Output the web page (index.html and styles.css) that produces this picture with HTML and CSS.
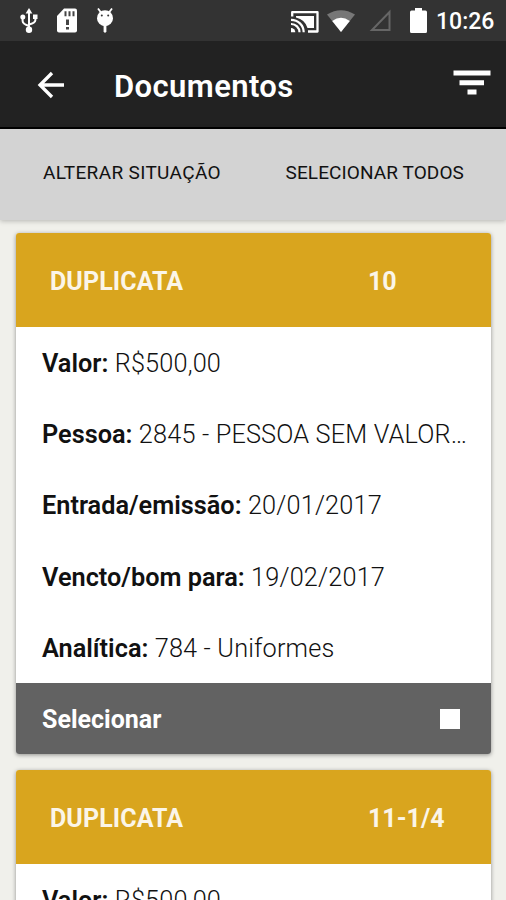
FILE: index.html
```
<!DOCTYPE html>
<html lang="pt-BR">
<head>
    <meta charset="utf-8">
    <meta name="viewport" content="width=device-width, initial-scale=1">
    <title>Documentos</title>
    <link rel="stylesheet" href="styles.css">
</head>
<body>

<div class="statusbar">
    <div class="status-left">
        <svg class="ic-usb" width="18" height="26" viewBox="0 0 18 26">
            <path d="M9 5v16M2.600 9v4q0 3 6.400 5M15.400 9v3q0 3-6.400 4.500" fill="none" stroke="#fff" stroke-width="2"/>
            <path d="M9 0l3.400 5.500H5.600z" fill="#fff"/>
            <circle cx="2.800" cy="9" r="2.500" fill="#fff"/>
            <path d="M13 6.500h4.500V11H13z" fill="#fff"/>
            <circle cx="9" cy="21.700" r="3.200" fill="#fff"/>
        </svg>
        <svg class="ic-sd" width="20" height="26" viewBox="0 0 20 26">
            <path d="M7 .5h11q2 0 2 2v20q0 2-2 2H2q-2 0-2-2V8z" fill="#fff"/>
            <path d="M7.500 3.200h2v5h-2zM11.500 3.200h2v5h-2zM15.500 3.200h2v5h-2zM9 11.500h3v5.500H9zM9 19h3v2.500H9z" fill="#444"/>
        </svg>
        <svg class="ic-bug" width="18" height="26" viewBox="0 0 18 26">
            <path d="M2 .5l3 4M16 .5l-3 4" stroke="#fff" stroke-width="1.800"/>
            <circle cx="9" cy="10.200" r="8" fill="#fff"/>
            <path d="M7.600 17h2.800v6.500q-1.400 2.500-2.800 0z" fill="#fff"/>
            <circle cx="5.800" cy="7.400" r="1" fill="#333"/>
            <circle cx="12.200" cy="7.400" r="1" fill="#333"/>
        </svg>
    </div>
    <div class="status-right">
        <svg class="ic-cast" width="28" height="22" viewBox="0 0 28 22">
            <path d="M1.200 5.500V1.200h25.300v19.300H17" fill="none" stroke="#fff" stroke-width="2.300" stroke-linejoin="round"/>
            <path d="M5 5h18v12h-6.500Q14 8.500 5 6.500z" fill="#fff"/>
            <path d="M0 8.800a12.500 12.500 0 0 1 12.700 12.500M0 13a8.300 8.300 0 0 1 8.500 8.300" fill="none" stroke="#fff" stroke-width="2.200"/>
            <path d="M0 17a4.300 4.300 0 0 1 4.300 4.300H0z" fill="#fff"/>
        </svg>
        <svg class="ic-wifi" width="28" height="22" viewBox="0 0 28 22">
            <path d="M0 4.500Q14-4 28 4.500L14 22z" fill="#777"/>
            <path d="M5.200 11Q14 4.500 22.800 11L14 22z" fill="#fff"/>
        </svg>
        <svg class="ic-signal" width="22" height="23" viewBox="0 0 22 23">
            <path d="M20.500 4v18H3z" fill="none" stroke="#666" stroke-width="2"/>
        </svg>
        <svg class="ic-battery" width="17" height="25" viewBox="0 0 17 24" preserveAspectRatio="none">
            <path d="M5 0h7v2.500h3.500q1.500 0 1.500 1.500v18.500q0 1.500-1.500 1.500h-14Q0 24 0 22.500V4q0-1.500 1.500-1.500H5z" fill="#fff"/>
        </svg>
        <span class="clock">10:26</span>
    </div>
</div>

<div class="navbar">
    <a class="back">
        <svg width="28" height="28" viewBox="0 0 28 28">
            <path d="M27 14H3.500M15 2L3 14l12 12" fill="none" stroke="#fff" stroke-width="3.300"/>
        </svg>
    </a>
    <h1 class="title">Documentos</h1>
    <a class="filter">
        <svg width="38" height="26" viewBox="0 0 38 26">
            <path d="M.5 .5h37v5H.5zM6.500 10.200h24.500v5H6.500zM14.500 19.500h9v5h-9z" fill="#fff"/>
        </svg>
    </a>
</div>

<div class="actions">
    <button class="btn btn-status">ALTERAR SITUAÇÃO</button>
    <button class="btn btn-all">SELECIONAR TODOS</button>
</div>

<div class="list">
    <div class="card">
        <div class="card-header">
            <span class="type">DUPLICATA</span>
            <span class="number">10</span>
        </div>
        <ul class="card-body">
            <li><b>Valor:</b> R$500,00</li>
            <li><b>Pessoa:</b> 2845 - PESSOA SEM VALOR…</li>
            <li><b>Entrada/emissão:</b> 20/01/2017</li>
            <li><b>Vencto/bom para:</b> 19/02/2017</li>
            <li><b>Analítica:</b> 784 - Uniformes</li>
        </ul>
        <div class="card-footer">
            <span>Selecionar</span>
            <i class="checkbox"></i>
        </div>
    </div>

    <div class="card">
        <div class="card-header">
            <span class="type">DUPLICATA</span>
            <span class="number">11-1/4</span>
        </div>
        <ul class="card-body">
            <li><b>Valor:</b> R$500,00</li>
        </ul>
    </div>
</div>

</body>
</html>
```
FILE: styles.css
```
* {
    box-sizing: border-box;
}

body {
    margin: 0;
    height: 900px;
    overflow: hidden;
    background: #f0f0eb;
    color: #111;
    font-family: Roboto, sans-serif;
}

svg {
    display: block;
    flex: none;
}

/* status bar */
.statusbar {
    display: flex;
    justify-content: space-between;
    height: 41px;
    padding: 0 12px 0 20px;
    background: #333;
    color: #fff;
}

.status-left, .status-right {
    display: flex;
    align-items: flex-start;
    padding-top: 8px;
}

.ic-sd {
    margin-left: 19px;
}

.ic-bug {
    margin-left: 19px;
}

.ic-cast {
    margin: 3px 8px 0 0;
}

.ic-wifi {
    margin: 2px 14px 0 0;
}

.ic-signal {
    margin-right: 19px;
}

.ic-battery {
    margin-right: 9px;
}

.clock {
    width: 58px;
    font-size: 23px;
    font-weight: 500;
    line-height: 27px;
    white-space: nowrap;
}

/* nav */
.navbar {
    display: flex;
    height: 88px;
    padding: 0 15px 0 37px;
    background: #222;
    border-bottom: 2px solid #000;
    color: #fff;
}

.back {
    margin: 30px 49px 0 0;
}

.title {
    flex: 1;
    margin: 0;
    font-size: 31px;
    font-weight: 600;
    line-height: 91px;
    letter-spacing: .4px;
}

.filter {
    margin-top: 29px;
}

/* actions */
.actions {
    position: relative;
    display: flex;
    height: 91px;
    padding: 0 42px 0 43px;
    justify-content: space-between;
    background: #d3d3d3;
    box-shadow: 0 1px 5px rgba(0, 0, 0, .25);
}

.btn {
    height: 87px;
    padding: 0;
    border: 0;
    background: none;
    color: #111;
    font: 400 19px/87px Roboto, sans-serif;
    letter-spacing: .1px;
    white-space: nowrap;
}

.btn-status {
    letter-spacing: .35px;
}

/* cards */
.list {
    padding: 13px 15px 0 16px;
}

.card {
    margin-bottom: 16px;
    border-radius: 3px;
    background: #fff;
    box-shadow: 0 1px 4px rgba(0, 0, 0, .4);
    overflow: hidden;
    font-size: 25px;
}

.card-header {
    display: flex;
    height: 94px;
    padding-left: 34px;
    background: #d9a51e;
    color: #fbf5e8;
    font-size: 25px;
    font-weight: 700;
    line-height: 98px;
}

.type {
    width: 318px;
    letter-spacing: .1px;
}

.card-body {
    margin: 0;
    padding: 0 0 0 26px;
    list-style: none;
    font-size: 25.3px;
    font-weight: 300;
    letter-spacing: .16px;
}

.card-body li {
    height: 71.2px;
    line-height: 73.600px;
    white-space: nowrap;
}

.card-body b {
    font-weight: 600;
    letter-spacing: 0;
}

.card-footer {
    display: flex;
    align-items: center;
    justify-content: space-between;
    height: 71px;
    padding: 2px 31px 0 26px;
    background: #626262;
    color: #fff;
    font-weight: 700;
}

.checkbox {
    width: 20px;
    height: 20px;
    background: #fff;
}
```
